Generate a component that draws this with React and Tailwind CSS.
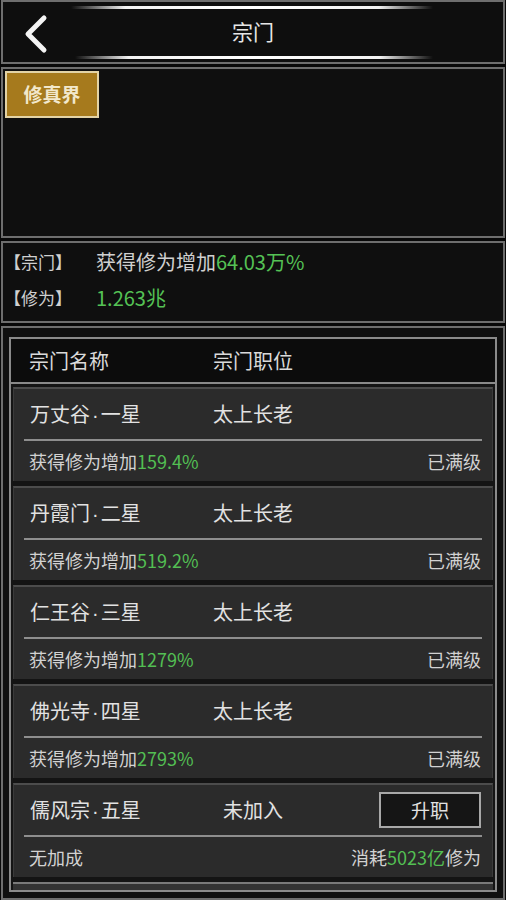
import React from 'react';

const sects = [
  { name: '万丈谷', star: '一星', title: '太上长老', bonus: '159.4%', state: '已满级' },
  { name: '丹霞门', star: '二星', title: '太上长老', bonus: '519.2%', state: '已满级' },
  { name: '仁王谷', star: '三星', title: '太上长老', bonus: '1279%', state: '已满级' },
  { name: '佛光寺', star: '四星', title: '太上长老', bonus: '2793%', state: '已满级' },
];

const SectName = ({ name, star }) => (
  <span className="w-[163px] text-[20px] text-[#e2e2e2]">
    {name}
    <span className="font-['Liberation_Sans'] mx-[2px]">·</span>
    {star}
  </span>
);

const SectCard = ({ sect }) => (
  <div className="h-[94px] shrink-0 bg-[#2b2b2b] border-t-2 border-[#4c4c4c] border-x border-x-[#3a3a3a] flex flex-col">
    <div className="h-[50px] flex items-center pl-[16px] pr-[11px]">
      <SectName name={sect.name} star={sect.star} />
      <span className="w-[120px] text-center text-[20px] text-[#e2e2e2]">{sect.title}</span>
    </div>
    <div className="mx-[10px] h-[2px] bg-[#8e8e8e]" />
    <div className="flex-1 flex items-center justify-between pl-[15px] pr-[11px] text-[18px] text-[#d2d2d2]">
      <span>
        获得修为增加<span className="text-[#53bf53]">{sect.bonus}</span>
      </span>
      <span>{sect.state}</span>
    </div>
  </div>
);

export default function App() {
  return (
    <div
      className="w-[506px] h-[900px] bg-[#080808] overflow-hidden flex flex-col gap-[3px] px-px"
      style={{ fontFamily: '"Noto Sans CJK SC", "Noto Sans", sans-serif' }}
    >
      {/* Header */}
      <div className="relative h-[64px] shrink-0 border-2 border-[#6e6e6e] bg-[#0e0e0e] flex items-center justify-center">
        <div className="absolute left-[68px] right-[70px] top-[4px] h-[3px] bg-[linear-gradient(to_right,transparent,#f2f2f2_15%,#ffffff_50%,#f2f2f2_85%,transparent)]" />
        <div className="absolute left-[72px] right-[70px] bottom-[3px] h-[3px] bg-[linear-gradient(to_right,transparent,#f2f2f2_15%,#ffffff_50%,#f2f2f2_85%,transparent)]" />
        <button className="absolute left-[18px] top-[12px] w-[30px] h-[40px] flex items-center justify-center">
          <svg width="26" height="40" viewBox="0 0 26 40" fill="none">
            <polyline points="21,4 5,20 21,36" stroke="#f4f4f4" strokeWidth="5" strokeLinecap="round" strokeLinejoin="round" />
          </svg>
        </button>
        <span className="text-[21px] text-[#e6e6e6]">宗门</span>
      </div>

      {/* Realm panel */}
      <div className="h-[171px] shrink-0 border-2 border-[#6e6e6e] bg-[#0f0f0f] p-[2px]">
        <button className="w-[94px] h-[47px] bg-[#a67a1d] border-2 border-[#e3d3a6] flex items-center justify-center text-[19px] font-bold text-[#f2e8cc]">
          修真界
        </button>
      </div>

      {/* Info panel */}
      <div className="h-[82px] shrink-0 border-2 border-[#6e6e6e] bg-[#0f0f0f] flex flex-col justify-center gap-[10px] pl-px pb-[4px]">
        <div className="flex items-center h-[26px]">
          <span className="w-[92px] text-[17px] text-[#d0d0d0]">【宗门】</span>
          <span className="text-[20px] text-[#d0d0d0]">
            获得修为增加<span className="text-[#55c255]">64.03万%</span>
          </span>
        </div>
        <div className="flex items-center h-[26px]">
          <span className="w-[92px] text-[17px] text-[#d0d0d0]">【修为】</span>
          <span className="text-[20px] text-[#55c255]">1.263兆</span>
        </div>
      </div>

      {/* Sect list */}
      <div className="flex-1 min-h-0 border-2 border-[#6e6e6e] bg-[#0f0f0f] pt-[9px] px-[6px] pb-[6px] flex flex-col">
        <div className="flex-1 min-h-0 border-2 border-[#8a8a8a] bg-[#141414] flex flex-col overflow-hidden">
          <div className="h-[45px] shrink-0 border-b-2 border-[#8a8a8a] bg-[#0c0c0c] flex items-center pl-[18px] text-[20px] text-[#dadada]">
            <span className="w-[164px]">宗门名称</span>
            <span className="w-[120px] text-center">宗门职位</span>
          </div>
          <div className="flex-1 min-h-0 flex flex-col gap-[5px] px-[2px] pt-[3px]">
            {sects.map((s) => (
              <SectCard key={s.name} sect={s} />
            ))}
            <div className="h-[94px] shrink-0 bg-[#2b2b2b] border-t-2 border-[#4c4c4c] border-x border-x-[#3a3a3a] flex flex-col">
              <div className="h-[50px] flex items-center pl-[16px] pr-[11px]">
                <SectName name="儒风宗" star="五星" />
                <span className="w-[120px] text-center text-[20px] text-[#e2e2e2]">未加入</span>
                <div className="flex-1 flex justify-end">
                  <button className="w-[102px] h-[36px] bg-[#151515] border-2 border-[#a8a8a8] text-[19px] text-[#e2e2e2] flex items-center justify-center">
                    升职
                  </button>
                </div>
              </div>
              <div className="mx-[10px] h-[2px] bg-[#8e8e8e]" />
              <div className="flex-1 flex items-center justify-between pl-[15px] pr-[11px] text-[18px] text-[#d2d2d2]">
                <span>无加成</span>
                <span>
                  消耗<span className="text-[#53bf53]">5023亿</span>修为
                </span>
              </div>
            </div>
            <div className="h-[20px] shrink-0 bg-[#333333] border-t-2 border-[#7a7a7a]" />
          </div>
        </div>
      </div>
    </div>
  );
}
